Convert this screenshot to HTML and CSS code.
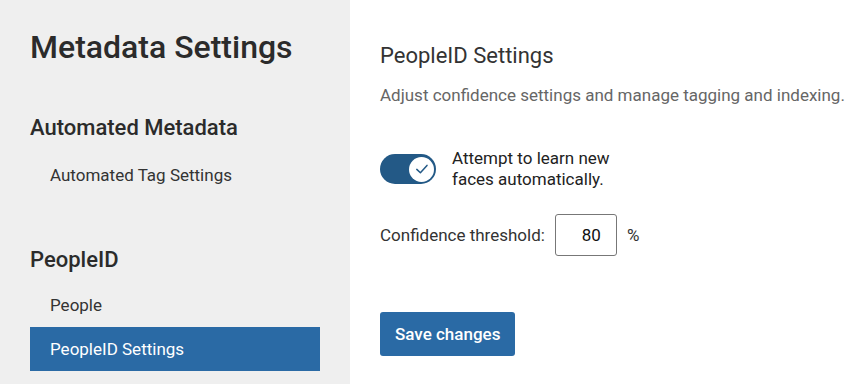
FILE: index.html
```html
<!DOCTYPE html>
<html lang="en">
<head>
  <meta charset="UTF-8">
  <meta name="viewport" content="width=device-width, initial-scale=1.0">
  <title>Metadata Settings</title>
  <link rel="stylesheet" href="styles.css">
</head>
<body>
<nav class="sidebar">
  <h1 class="title">Metadata Settings</h1>
  <h2 class="group">Automated Metadata</h2>
  <a class="item" href="#">Automated Tag Settings</a>
  <h2 class="group group-gap">PeopleID</h2>
  <a class="item" href="#">People</a>
  <a class="item active" href="#">PeopleID Settings</a>
</nav>
<main class="content">
  <h2 class="heading">PeopleID Settings</h2>
  <p class="desc">Adjust confidence settings and manage tagging and indexing.</p>
  <div class="toggle-row">
    <span class="toggle" role="switch" aria-checked="true">
      <span class="knob">
        <svg width="16" height="16" viewBox="0 0 16 16">
          <path d="M2.8 8.4 L6.4 11.8 L13 4.4" fill="none" stroke="#235986" stroke-width="1.5" stroke-linecap="round" stroke-linejoin="round"/>
        </svg>
      </span>
    </span>
    <span class="toggle-label">Attempt to learn new<br>faces automatically.</span>
  </div>
  <div class="field-row">
    <label for="threshold">Confidence threshold:</label>
    <input type="text" id="threshold" class="num" value="80">
    <span class="unit">%</span>
  </div>
  <button class="btn">Save changes</button>
</main>
</body>
</html>
```

FILE: styles.css
```css
body {
  margin: 0;
  font-family: Roboto, "Liberation Sans", sans-serif;
  color: #333333;
  display: flex;
  height: 100vh;
  overflow: hidden;
}
.sidebar {
  width: 350px;
  flex-shrink: 0;
  box-sizing: border-box;
  background-color: #efefef;
  padding: 28px 30px 0;
  display: flex;
  flex-direction: column;
  align-items: stretch;
}
.title {
  font-size: 32px;
  font-weight: 500;
  line-height: 1.2;
  margin: 0 0 49px;
  color: #2b2b2b;
}
.group {
  font-size: 22px;
  font-weight: 500;
  line-height: 1.2;
  margin: 0 0 11px;
  color: #2b2b2b;
}
.group-gap {
  margin-top: 50px;
  margin-bottom: 10px;
}
.item {
  display: block;
  height: 44px;
  line-height: 44px;
  padding-left: 20px;
  font-size: 17px;
  color: #333333;
  text-decoration: none;
}
.item.active {
  background-color: #2a6aa5;
  color: #ffffff;
}
.content {
  flex: 1;
  padding: 43px 0 0 30px;
}
.heading {
  font-size: 22px;
  font-weight: 400;
  line-height: 1.2;
  margin: 0 0 14px;
  color: #333333;
}
.desc {
  font-size: 17px;
  line-height: 24px;
  margin: 0 0 41px;
  color: #666666;
}
.toggle-row {
  display: flex;
  align-items: center;
  gap: 16px;
}
.toggle {
  width: 56px;
  height: 30px;
  border-radius: 15px;
  background-color: #235986;
  display: flex;
  align-items: center;
  justify-content: flex-end;
  padding: 0 2px;
  box-sizing: border-box;
}
.knob {
  width: 25px;
  height: 25px;
  border-radius: 50%;
  background-color: #ffffff;
  display: flex;
  align-items: center;
  justify-content: center;
}
.toggle-label {
  font-size: 17px;
  line-height: 21px;
  color: #222222;
}
.field-row {
  display: flex;
  align-items: center;
  margin-top: 24px;
  font-size: 17px;
  color: #333333;
}
.num {
  width: 62px;
  height: 42px;
  box-sizing: border-box;
  margin-left: 10px;
  border: 1px solid #777777;
  border-radius: 3px;
  padding: 0 15px;
  text-align: right;
  font-family: Roboto, "Liberation Sans", sans-serif;
  font-size: 17px;
  color: #111111;
}
.unit {
  margin-left: 10px;
}
.btn {
  display: block;
  margin-top: 56px;
  height: 44px;
  padding: 0 15px;
  border: none;
  border-radius: 3px;
  background-color: #2a6aa5;
  color: #ffffff;
  font-family: Roboto, "Liberation Sans", sans-serif;
  font-size: 17px;
  font-weight: 500;
}
```
